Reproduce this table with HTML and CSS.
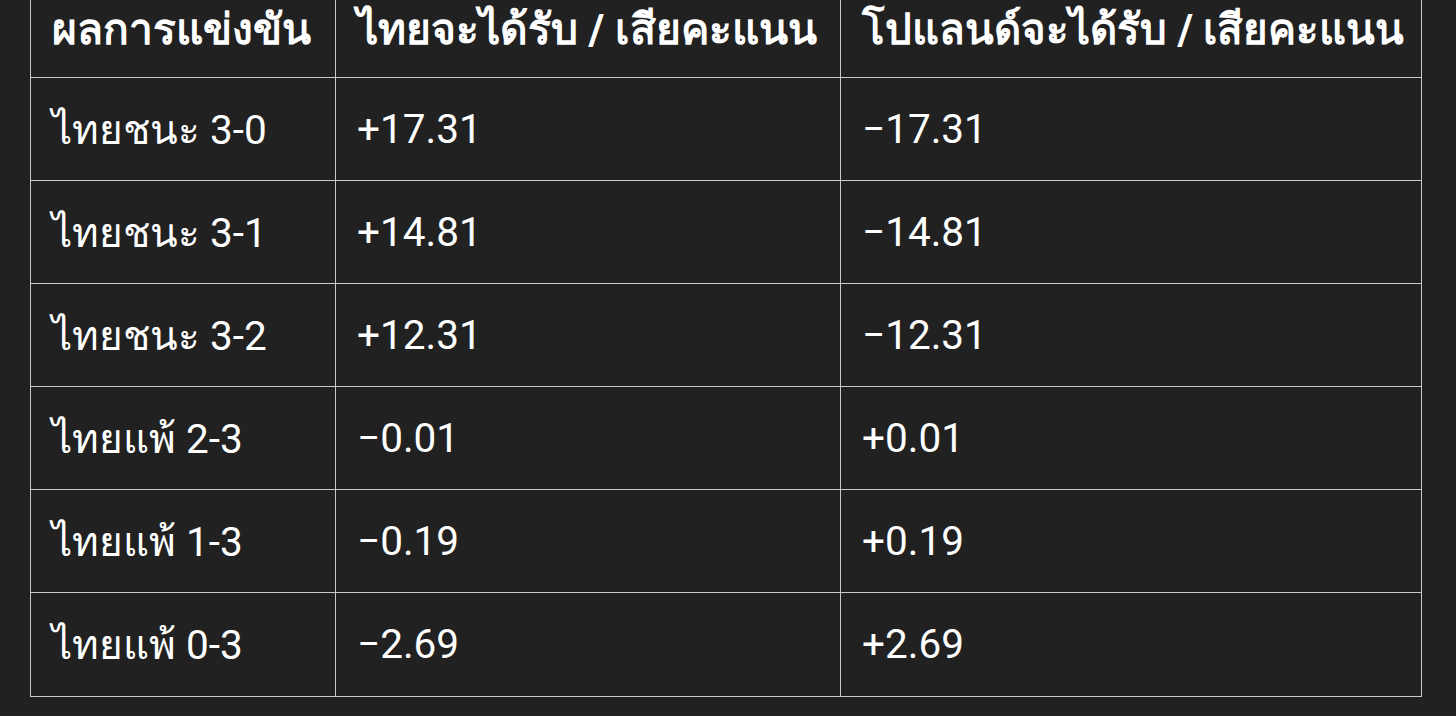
FILE: index.html
```html
<!DOCTYPE html>
<html lang="th">
<head>
<meta charset="utf-8">
<link rel="stylesheet" href="styles.css">
</head>
<body>
<div class="wrap">
<table class="score">
<thead>
<tr><th class="c1">ผลการแข่งขัน</th><th class="c2">ไทยจะได้รับ / เสียคะแนน</th><th class="c3">โปแลนด์จะได้รับ / เสียคะแนน</th></tr>
</thead>
<tbody>
<tr><td>ไทยชนะ 3-0</td><td>+17.31</td><td>−17.31</td></tr>
<tr><td>ไทยชนะ 3-1</td><td>+14.81</td><td>−14.81</td></tr>
<tr><td>ไทยชนะ 3-2</td><td>+12.31</td><td>−12.31</td></tr>
<tr><td>ไทยแพ้ 2-3</td><td>−0.01</td><td>+0.01</td></tr>
<tr><td>ไทยแพ้ 1-3</td><td>−0.19</td><td>+0.19</td></tr>
<tr class="last"><td>ไทยแพ้ 0-3</td><td>−2.69</td><td>+2.69</td></tr>
</tbody>
</table>
</div>
</body>
</html>
```
FILE: styles.css
```css
html, body {
  margin: 0;
  padding: 0;
  background: #212121;
}
body {
  font-family: Roboto, "Liberation Sans", sans-serif;
  color: #ffffff;
  overflow: hidden;
  height: 716px;
}
.wrap {
  padding-left: 30px;
  margin-top: -27px;
}
.score {
  border-collapse: collapse;
  table-layout: fixed;
  width: 1392px;
}
.score th, .score td {
  border: 1px solid #c8c8c8;
  text-align: left;
  padding: 0 0 0 21px;
  vertical-align: middle;
  white-space: nowrap;
}
.score th {
  height: 104px;
  font-size: 42.5px;
  font-weight: 700;
  padding-top: 6px;
  box-sizing: border-box;
}
.score th.c3 {
  font-size: 42px;
}
.score td {
  height: 103px;
  box-sizing: border-box;
  font-size: 40.5px;
  font-weight: 400;
}
.score .last td {
  height: 104px;
  padding-bottom: 1px;
}
.c1 { width: 305px; }
.c2 { width: 505px; }
.c3 { width: 581px; }
```
